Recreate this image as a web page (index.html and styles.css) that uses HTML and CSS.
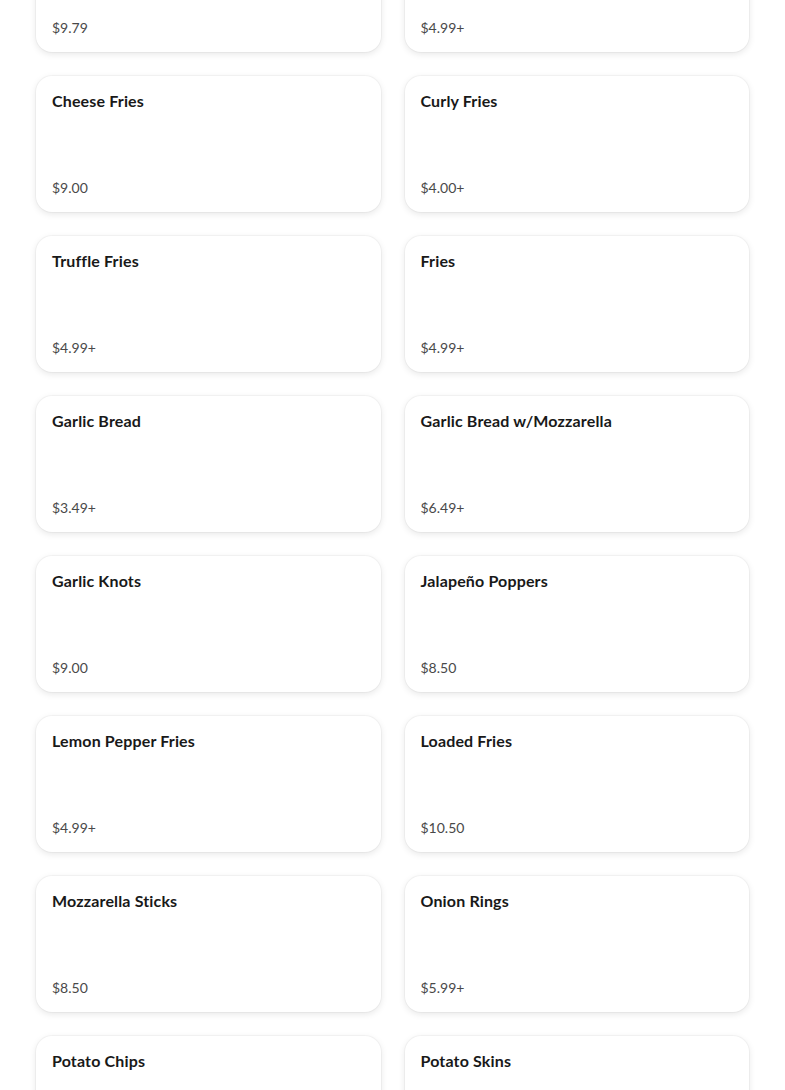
FILE: index.html
```html
<!DOCTYPE html>
<html>
<head>
<meta charset="utf-8">
<link rel="stylesheet" href="styles.css">
</head>
<body>
<div class="menu">
  <div class="card"><div class="title">Chicken Wings</div><div class="price">$9.79</div></div>
  <div class="card"><div class="title">Cajun Fries</div><div class="price">$4.99+</div></div>
  <div class="card"><div class="title">Cheese Fries</div><div class="price">$9.00</div></div>
  <div class="card"><div class="title">Curly Fries</div><div class="price">$4.00+</div></div>
  <div class="card"><div class="title">Truffle Fries</div><div class="price">$4.99+</div></div>
  <div class="card"><div class="title">Fries</div><div class="price">$4.99+</div></div>
  <div class="card"><div class="title">Garlic Bread</div><div class="price">$3.49+</div></div>
  <div class="card"><div class="title">Garlic Bread w/Mozzarella</div><div class="price">$6.49+</div></div>
  <div class="card"><div class="title">Garlic Knots</div><div class="price">$9.00</div></div>
  <div class="card"><div class="title">Jalapeño Poppers</div><div class="price">$8.50</div></div>
  <div class="card"><div class="title">Lemon Pepper Fries</div><div class="price">$4.99+</div></div>
  <div class="card"><div class="title">Loaded Fries</div><div class="price">$10.50</div></div>
  <div class="card"><div class="title">Mozzarella Sticks</div><div class="price">$8.50</div></div>
  <div class="card"><div class="title">Onion Rings</div><div class="price">$5.99+</div></div>
  <div class="card"><div class="title">Potato Chips</div><div class="price">$2.00</div></div>
  <div class="card"><div class="title">Potato Skins</div><div class="price">$8.00</div></div>
</div>
</body>
</html>
```
FILE: styles.css
```css
html, body {
  margin: 0;
  padding: 0;
  background: #ffffff;
  overflow: hidden;
}
body {
  font-family: Lato, "Open Sans", "Liberation Sans", sans-serif;
  color: #191919;
}
.menu {
  display: grid;
  grid-template-columns: 1fr 1fr;
  column-gap: 24px;
  row-gap: 24px;
  padding: 0 36px;
  margin-top: -84px;
}
.card {
  height: 136px;
  box-sizing: border-box;
  padding: 15px 16px 14px;
  border-radius: 16px;
  background: #fff;
  box-shadow: 0 0 0 1px rgba(0,0,0,0.03), 0 2px 7px rgba(0,0,0,0.10);
  display: flex;
  flex-direction: column;
  justify-content: space-between;
}
.title {
  font-size: 16px;
  line-height: 20px;
  font-weight: 700;
  letter-spacing: 0.15px;
  color: #191919;
}
.price {
  font-size: 14px;
  line-height: 20px;
  color: #494949;
}
```
